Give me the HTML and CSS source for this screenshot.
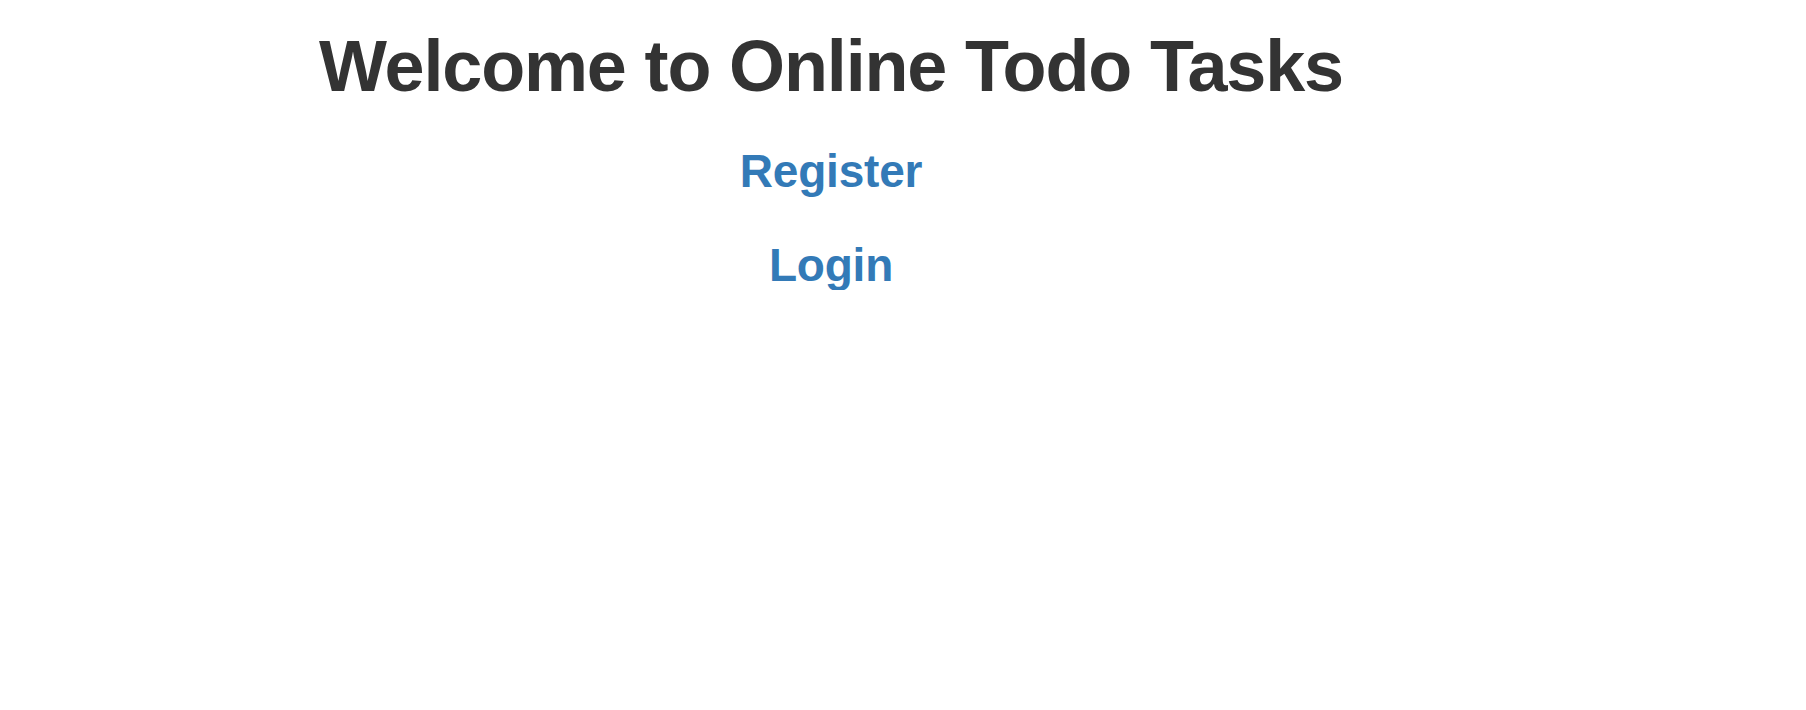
FILE: index.html
```html
<!DOCTYPE html>
<html lang="en">
<head>
<meta charset="utf-8">
<title>Online Todo Tasks</title>
<link rel="stylesheet" href="styles.css">
</head>
<body>
<main class="page">
  <h1 class="title">Welcome to Online Todo Tasks</h1>
  <nav class="links">
    <a class="link" href="#">Register</a>
    <a class="link" href="#">Login</a>
  </nav>
</main>
</body>
</html>
```

FILE: styles.css
```css
html, body {
  margin: 0;
  padding: 0;
  background: #ffffff;
}

body {
  font-family: "Liberation Sans", Arial, Helvetica, sans-serif;
  color: #333333;
}

.page {
  width: 1662px;
  padding-top: 27px;
  display: flex;
  flex-direction: column;
  align-items: center;
  text-align: center;
}

.title {
  margin: 0;
  font-size: 72px;
  line-height: 1.1;
  font-weight: 700;
  letter-spacing: -1.15px;
  color: #333333;
}

.links {
  margin-top: 40px;
  display: flex;
  flex-direction: column;
  align-items: center;
  gap: 43px;
}

.link {
  display: block;
  font-size: 46px;
  line-height: 1.1;
  font-weight: 700;
  letter-spacing: -0.2px;
  color: #337ab7;
  text-decoration: none;
}
```
